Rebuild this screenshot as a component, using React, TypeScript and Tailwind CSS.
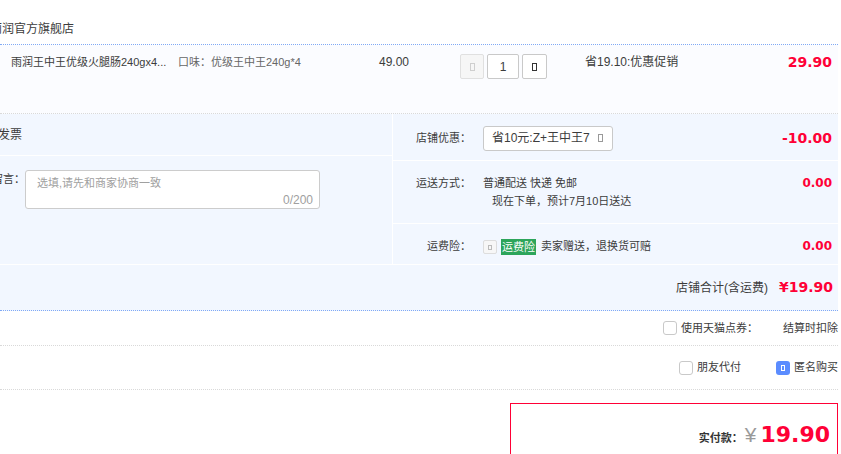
import React from "react";

function Tofu({ className = "" }: { className?: string }) {
  return <span className={"inline-block w-[5px] h-[8px] border border-current " + className} />;
}

function Box({ checked = false }: { checked?: boolean }) {
  if (checked) {
    return (
      <span className="flex items-center justify-center w-[14px] h-[14px] rounded-[3px] bg-[#5b8cff] text-white">
        <span className="inline-block w-[4px] h-[6px] border border-white" />
      </span>
    );
  }
  return <span className="block w-[14px] h-[14px] rounded-[3px] border border-[#c9c9c9] bg-white" />;
}

export default function App() {
  return (
    <div className="w-[841px] h-[454px] overflow-hidden bg-white text-[#3c3c3c] font-['Liberation_Sans','Noto_Sans_CJK_SC',sans-serif]">
      <div className="w-[838px]">
        {/* shop header */}
        <div className="h-[45px] border-b border-dotted border-[#80a9f5] pt-[20px]">
          <span className="block ml-[-10px] text-[12px] leading-[18px]">雨润官方旗舰店</span>
        </div>

        {/* item row */}
        <div className="h-[69px] bg-[#fbfcff] border-b border-dotted border-[#d9d9d9] flex items-start pt-[8px] text-[11px] leading-[18px]">
          <div className="ml-[11px] w-[167px] whitespace-nowrap">雨润王中王优级火腿肠240gx4...</div>
          <div className="w-[201px] whitespace-nowrap text-[#666]">口味：优级王中王240g*4</div>
          <div className="w-[81px] text-[12px]">49.00</div>
          <div className="flex gap-[3px] mt-[1px]">
            <div className="w-[24px] h-[25px] rounded-[2px] border border-[#e0e0e0] bg-[#f6f6f6] flex items-center justify-center text-[#cfcfcf]">
              <Tofu />
            </div>
            <div className="w-[32px] h-[25px] rounded-[2px] border border-[#c9c9c9] bg-white flex items-center justify-center text-[12px]">1</div>
            <div className="w-[25px] h-[25px] rounded-[2px] border border-[#c9c9c9] bg-white flex items-center justify-center text-[#333]">
              <Tofu />
            </div>
          </div>
          <div className="ml-[38px] text-[12px] whitespace-nowrap">省19.10:优惠促销</div>
          <div className="ml-auto pr-[6px] text-[14px] font-bold text-[#ff0036] font-['DejaVu_Sans',sans-serif]">29.90</div>
        </div>

        {/* options section */}
        <div className="flex h-[151px] bg-[#f2f7ff] border-b border-white">
          <div className="w-[393px] border-r border-white flex flex-col">
            <div className="h-[42px] border-b border-white flex items-center text-[12px]">
              <span className="ml-[-2px]">发票</span>
            </div>
            <div className="flex items-start pt-[14px] text-[11px]">
              <span className="ml-[-8px] w-[33px] leading-[18px] whitespace-nowrap">留言：</span>
              <div className="w-[295px] h-[39px] bg-white border border-[#cccccc] rounded-[3px] flex flex-col pt-[3px]">
                <span className="pl-[11px] leading-[18px] text-[#a0a0a0]">选填,请先和商家协商一致</span>
                <span className="self-end pr-[6px] leading-[16px] text-[12px] text-[#a0a0a0]">0/200</span>
              </div>
            </div>
          </div>
          <div className="flex-1 flex flex-col text-[11px]">
            <div className="h-[47px] border-b border-white flex items-center pt-[2px]">
              <span className="w-[78px] text-right">店铺优惠：</span>
              <div className="ml-[12px] w-[130px] h-[25px] bg-white border border-[#c9c9c9] rounded-[3px] flex items-center pl-[8px] pr-[9px] text-[12px]">
                <span>省10元:Z+王中王7</span>
                <Tofu className="ml-auto text-[#999]" />
              </div>
              <span className="ml-auto pr-[6px] text-[14px] font-bold text-[#ff0036] font-['DejaVu_Sans',sans-serif]">-10.00</span>
            </div>
            <div className="h-[63px] border-b border-white flex items-start pt-[13px] leading-[18px]">
              <span className="w-[78px] text-right">运送方式：</span>
              <div className="ml-[12px] flex flex-col">
                <span className="whitespace-pre">普通配送 快递 免邮</span>
                <span className="pl-[9px]">现在下单，预计7月10日送达</span>
              </div>
              <span className="ml-auto pr-[6px] text-[12px] font-bold text-[#ff0036] font-['DejaVu_Sans',sans-serif]">0.00</span>
            </div>
            <div className="flex-1 flex items-start pt-[13px] leading-[18px]">
              <span className="w-[78px] text-right">运费险：</span>
              <span className="ml-[12px] mt-[3px] w-[14px] h-[14px] rounded-[2px] border border-[#dddddd] bg-[#f7f7f7] flex items-center justify-center text-[#bbb]">
                <span className="inline-block w-[4px] h-[5px] border border-current" />
              </span>
              <span className="ml-[4px] mt-[2px] h-[16px] leading-[16px] px-[1px] bg-[#2da55b] text-white">运费险</span>
              <span className="ml-[5px]">卖家赠送，退换货可赔</span>
              <span className="ml-auto pr-[6px] text-[12px] font-bold text-[#ff0036] font-['DejaVu_Sans',sans-serif]">0.00</span>
            </div>
          </div>
        </div>

        {/* shop total */}
        <div className="h-[46px] bg-[#f2f7ff] border-b border-dotted border-[#80a9f5] flex items-center justify-end pr-[5px]">
          <span className="text-[12px]">店铺合计(含运费)</span>
          <span className="ml-[11px] text-[14px] font-bold text-[#ff0036] font-['DejaVu_Sans',sans-serif]">¥19.90</span>
        </div>

        {/* coupon row */}
        <div className="h-[35px] border-b border-dotted border-[#d9d9d9] flex items-center justify-end text-[11px]">
          <Box />
          <span className="ml-[4px]">使用天猫点券：</span>
          <span className="ml-[25px]">结算时扣除</span>
        </div>

        {/* pay options */}
        <div className="h-[44px] border-b border-dotted border-[#d9d9d9] flex items-center justify-end text-[11px]">
          <Box />
          <span className="ml-[4px]">朋友代付</span>
          <span className="ml-[35px]"><Box checked /></span>
          <span className="ml-[4px]">匿名购买</span>
        </div>

        {/* total box */}
        <div className="mt-[13px] ml-auto w-[328px] h-[70px] border border-[#ff0036] flex items-baseline justify-end pr-[7px] pt-[19px]">
          <span className="text-[11px] font-bold text-[#333]">实付款：</span>
          <span className="ml-[2px] mr-[4px] text-[21px] leading-[23px] text-[#9a9a9a]">¥</span>
          <span className="text-[22px] leading-[23px] font-bold text-[#ff0036] font-['DejaVu_Sans',sans-serif]">19.90</span>
        </div>
      </div>
    </div>
  );
}
